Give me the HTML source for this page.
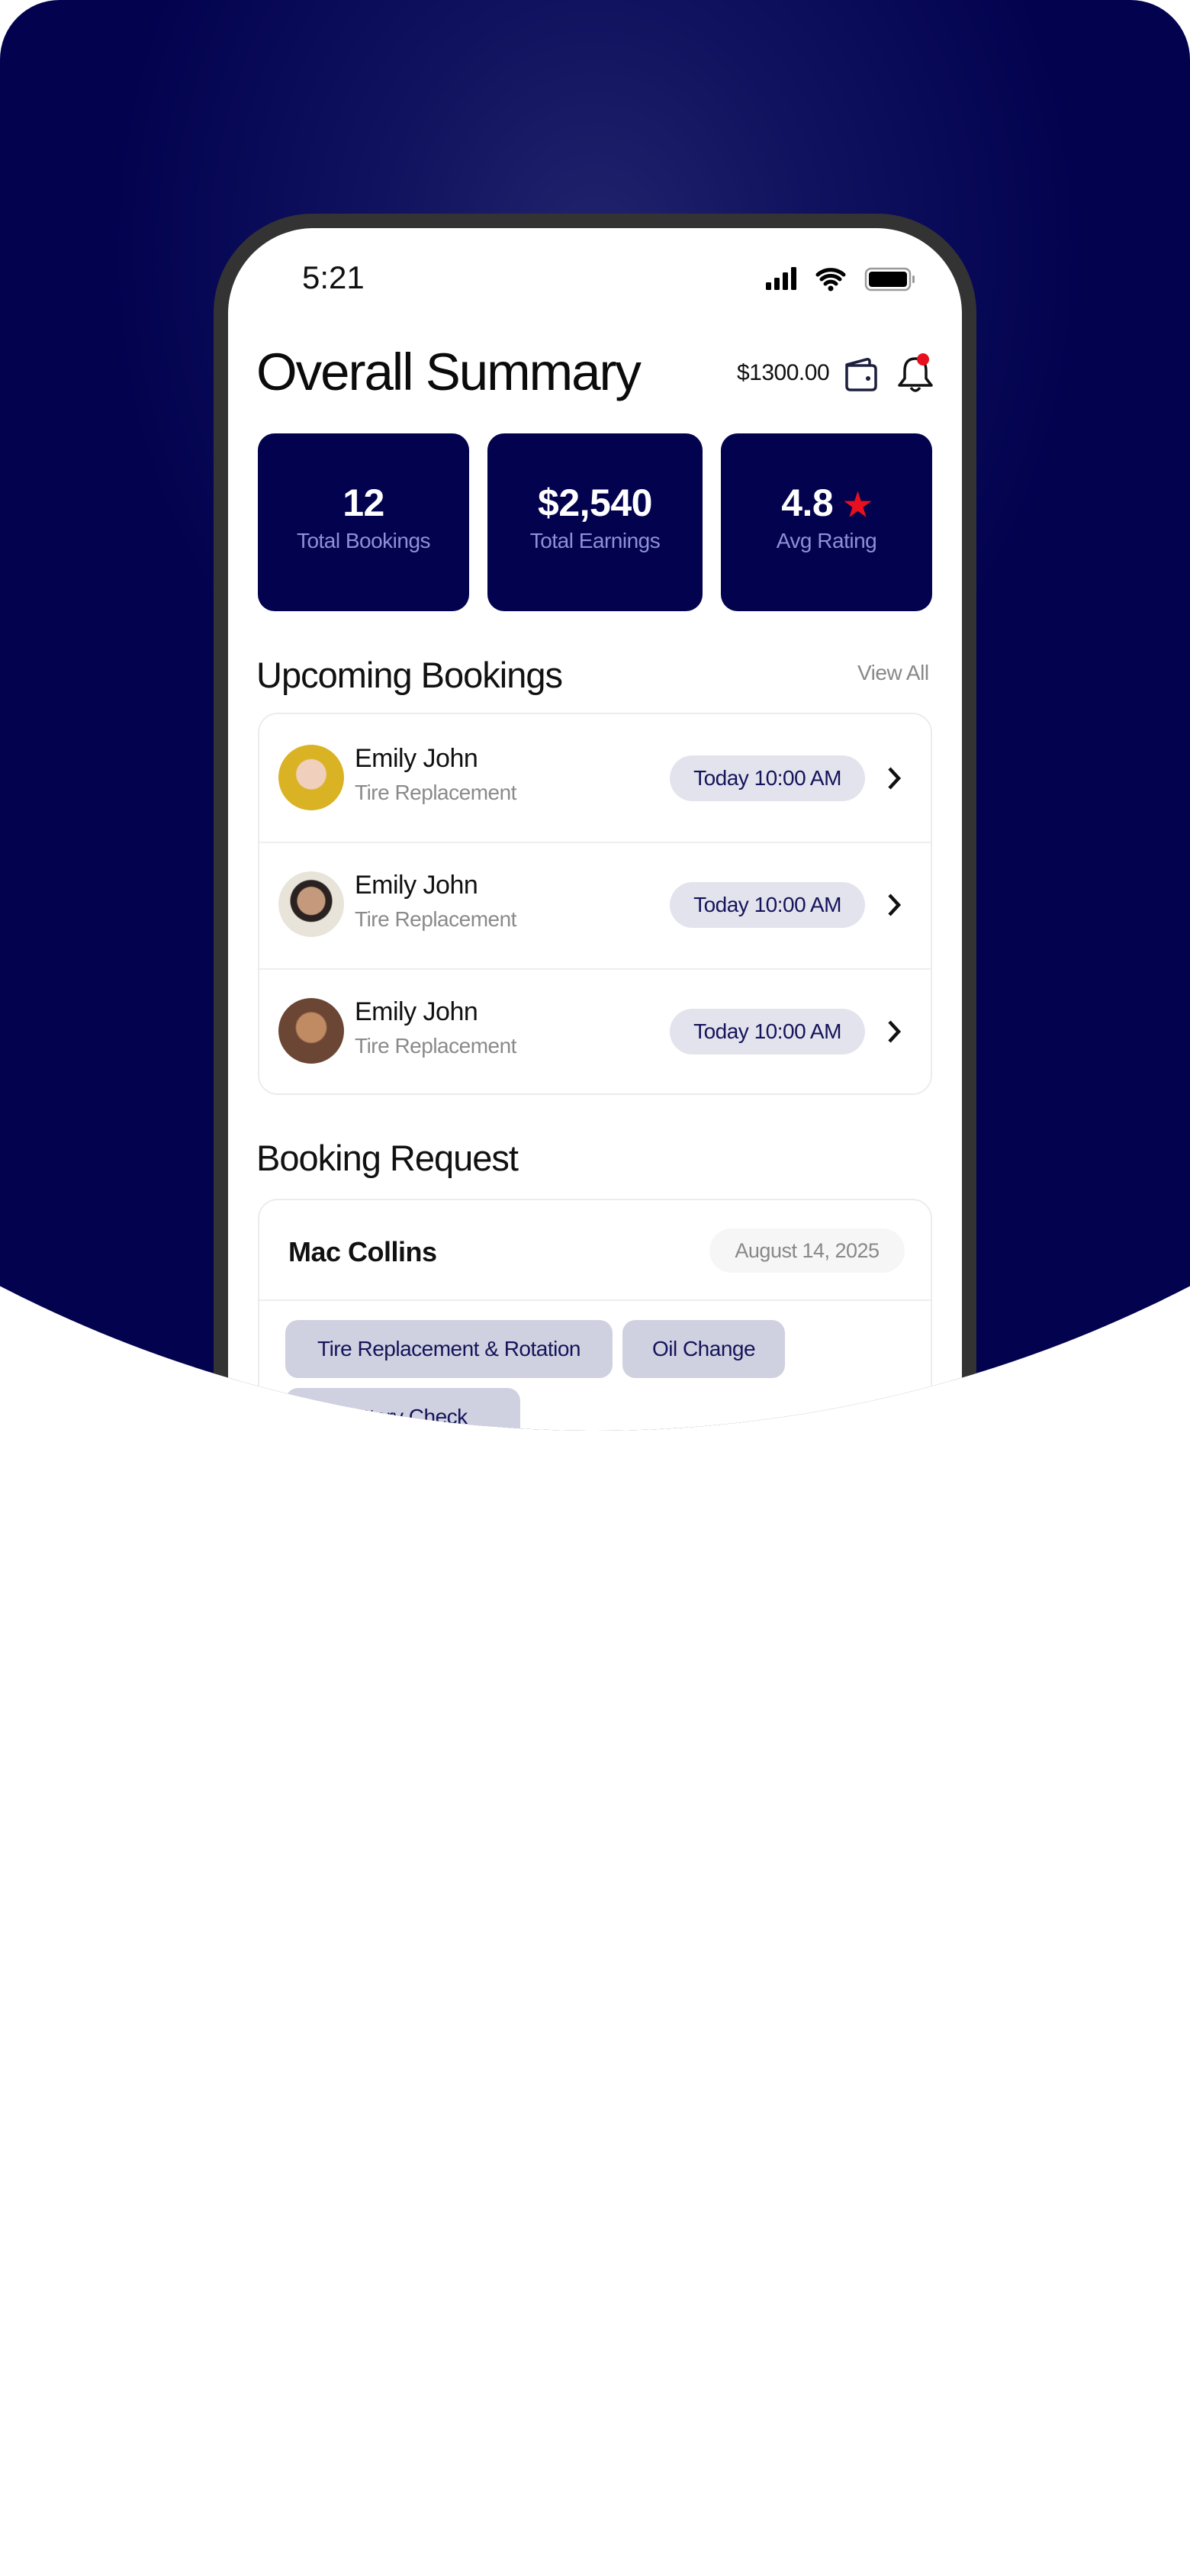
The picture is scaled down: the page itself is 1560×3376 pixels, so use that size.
<!DOCTYPE html>
<html><head><meta charset="utf-8"><style>
*{margin:0;padding:0;box-sizing:border-box}
body{width:1560px;height:3376px;background:#fff;font-family:"Liberation Sans",sans-serif;position:relative;overflow:hidden}
.wrap{position:absolute;left:0;top:0;width:1560px;height:1880px;border-radius:78px 78px 0 0;overflow:hidden}
.clip{position:absolute;left:0;top:0;width:1560px;height:1880px;clip-path:circle(1700px at 780px 175px)}
.bg{position:absolute;inset:0;background:radial-gradient(ellipse 640px 760px at 780px 330px,#22236c 0%,#10125f 45%,#02024f 100%)}
.frame{position:absolute;left:280px;top:280px;width:1000px;height:1530px;background:#333;border-radius:130px 130px 0 0}
.screen{position:absolute;left:299px;top:299px;width:962px;height:1600px;background:#fff;border-radius:112px 112px 0 0}
.a{position:absolute}
.card{position:absolute;top:568px;height:233px;background:#02024f;border-radius:22px;color:#fff;text-align:center}
.card .n{position:absolute;left:0;right:0;top:62px;font-size:50px;font-weight:bold;letter-spacing:-0.5px}
.card .l{position:absolute;left:0;right:0;top:125px;font-size:28px;color:#8d90d4;letter-spacing:-0.5px}
.row{position:absolute;left:338px;width:884px;height:167px}
.av{position:absolute;left:27px;top:41px;width:86px;height:86px;border-radius:50%}
.nm{position:absolute;left:127px;top:40px;font-size:34px;color:#111;letter-spacing:-0.5px}
.sb{position:absolute;left:127px;top:88px;font-size:28px;color:#8a8a8a;letter-spacing:-0.5px}
.pill{position:absolute;left:540px;top:55px;width:256px;height:60px;border-radius:30px;background:#e3e3ee;color:#14145a;font-size:28px;line-height:60px;text-align:center;letter-spacing:-0.5px}
.chev{position:absolute;left:824px;top:68px}
.tag{position:absolute;height:76px;background:#cfd0e0;border-radius:17px;color:#14145a;font-size:28px;line-height:76px;text-align:center;letter-spacing:-0.5px}
</style></head><body>
<div class="wrap"><div class="clip">
<div class="bg"></div>
<div class="frame"></div>
<div class="screen"></div>
<div class="a" style="left:396px;top:340px;font-size:42px;color:#111">5:21</div>
<svg class="a" style="left:1004px;top:348px" width="210" height="34" viewBox="0 0 210 34">
<rect x="0" y="22" width="7" height="10" rx="1.5"/><rect x="11" y="16" width="7" height="16" rx="1.5"/><rect x="22" y="9" width="7" height="23" rx="1.5"/><rect x="33" y="2" width="7" height="30" rx="1.5"/>
<path d="M68 12a26 26 0 0 1 34 0M73 18a18 18 0 0 1 24 0M78 24a10 10 0 0 1 14 0" stroke="#000" stroke-width="5" fill="none" stroke-linecap="round"/><circle cx="85" cy="30" r="3.5"/>
<rect x="131" y="4" width="58" height="28" rx="7" fill="none" stroke="#999" stroke-width="2.5"/><rect x="135" y="8" width="50" height="20" rx="4"/><rect x="192" y="13" width="3" height="10" rx="1.5" fill="#999"/>
</svg>
<div class="a" style="left:336px;top:448px;font-size:69px;color:#0b0b0b;letter-spacing:-2px">Overall Summary</div>
<div class="a" style="left:966px;top:472px;font-size:30px;color:#111;letter-spacing:-0.5px">$1300.00</div>
<svg class="a" style="left:1106px;top:466px" width="46" height="50" viewBox="0 0 46 50"><path d="M4 12 L30 5 Q34 4 34 8 V13 M4 12 V40 Q4 45 9 45 H37 Q42 45 42 40 V18 Q42 13 37 13 H6 Q4 13 4 12Z" fill="none" stroke="#1c1f3d" stroke-width="3.5" stroke-linejoin="round"/><circle cx="32" cy="30" r="3" fill="#1c1f3d"/></svg>
<svg class="a" style="left:1174px;top:462px" width="52" height="58" viewBox="0 0 52 58"><path d="M26 8 Q12 8 12 24 V34 L5 43 H47 L40 34 V24 Q40 8 26 8Z" fill="none" stroke="#111" stroke-width="3.5" stroke-linejoin="round"/><path d="M20 46 Q26 54 32 46" fill="none" stroke="#111" stroke-width="3.5"/><circle cx="36" cy="9" r="8" fill="#e8101e"/></svg>
<div class="card" style="left:338px;width:277px"><div class="n">12</div><div class="l">Total Bookings</div></div>
<div class="card" style="left:639px;width:282px"><div class="n">$2,540</div><div class="l">Total Earnings</div></div>
<div class="card" style="left:945px;width:277px"><div class="n">4.8 <span style="color:#e8101e;font-size:42px">★</span></div><div class="l">Avg Rating</div></div>
<div class="a" style="left:336px;top:857px;font-size:47px;color:#111;letter-spacing:-1px">Upcoming Bookings</div>
<div class="a" style="left:1124px;top:866px;font-size:28px;color:#888;letter-spacing:-0.5px">View All</div>
<div class="a" style="left:338px;top:934px;width:884px;height:501px;border:2px solid #ececec;border-radius:26px"></div>
<div class="a" style="left:340px;top:1103px;width:880px;height:2px;background:#eee"></div>
<div class="a" style="left:340px;top:1269px;width:880px;height:2px;background:#eee"></div>
<div class="row" style="top:935px"><div class="av" style="background:radial-gradient(circle at 50% 45%,#f0d0bc 0 30%,#d9b324 32%)"></div><div class="nm">Emily John</div><div class="sb">Tire Replacement</div><div class="pill">Today 10:00 AM</div><svg class="chev" width="20" height="34" viewBox="0 0 20 34"><path d="M4 4 L16 17 L4 30" fill="none" stroke="#111" stroke-width="4.5"/></svg></div>
<div class="row" style="top:1101px"><div class="av" style="background:radial-gradient(circle at 50% 45%,#c59a7c 0 28%,#2a2220 30% 42%,#e9e4da 44%)"></div><div class="nm">Emily John</div><div class="sb">Tire Replacement</div><div class="pill">Today 10:00 AM</div><svg class="chev" width="20" height="34" viewBox="0 0 20 34"><path d="M4 4 L16 17 L4 30" fill="none" stroke="#111" stroke-width="4.5"/></svg></div>
<div class="row" style="top:1267px"><div class="av" style="background:radial-gradient(circle at 50% 45%,#c08a62 0 30%,#6b4634 33%)"></div><div class="nm">Emily John</div><div class="sb">Tire Replacement</div><div class="pill">Today 10:00 AM</div><svg class="chev" width="20" height="34" viewBox="0 0 20 34"><path d="M4 4 L16 17 L4 30" fill="none" stroke="#111" stroke-width="4.5"/></svg></div>
<div class="a" style="left:336px;top:1490px;font-size:47px;color:#111;letter-spacing:-1px">Booking Request</div>
<div class="a" style="left:338px;top:1571px;width:884px;height:400px;border:2px solid #ececec;border-radius:26px"></div>
<div class="a" style="left:340px;top:1703px;width:880px;height:2px;background:#eee"></div>
<div class="a" style="left:378px;top:1620px;font-size:36px;color:#111;font-weight:bold;letter-spacing:-0.5px">Mac Collins</div>
<div class="a" style="left:930px;top:1610px;width:256px;height:58px;border-radius:29px;background:#f6f6f6;color:#888;font-size:27px;line-height:58px;text-align:center;letter-spacing:-0.5px">August 14, 2025</div>
<div class="tag" style="left:374px;top:1730px;width:429px">Tire Replacement &amp; Rotation</div>
<div class="tag" style="left:816px;top:1730px;width:213px">Oil Change</div>
<div class="tag" style="left:374px;top:1819px;width:308px">Battery Check</div>
</div></div>
</body></html>
